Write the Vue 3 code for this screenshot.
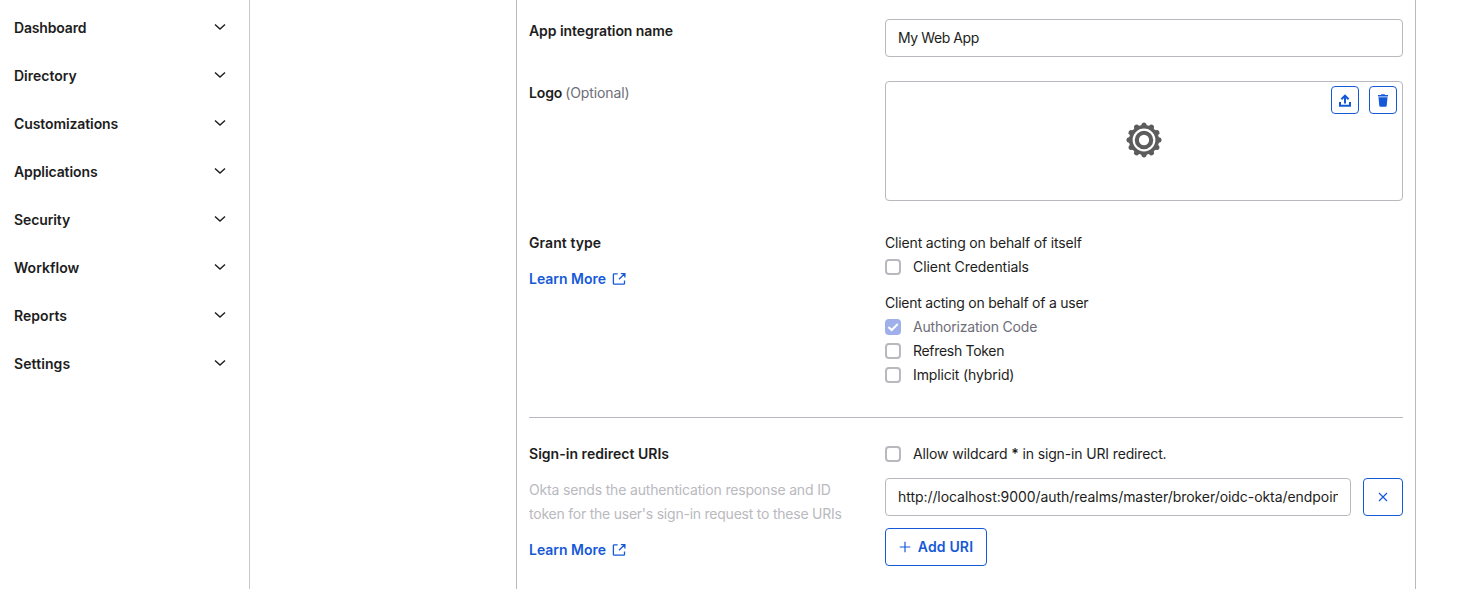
<script setup>
const nav = ['Dashboard', 'Directory', 'Customizations', 'Applications', 'Security', 'Workflow', 'Reports', 'Settings']
const teeth = Array.from({ length: 12 }, (_, i) => i * 30)
const userGrants = [
  { label: 'Authorization Code', cls: 'auth-code', checked: true },
  { label: 'Refresh Token', cls: 'refresh', checked: false },
  { label: 'Implicit (hybrid)', cls: 'implicit', checked: false }
]
</script>

<template>
  <div class="page">
    <nav class="sidebar">
      <a v-for="item in nav" :key="item" class="nav-item" :class="'nav-' + item.toLowerCase()">
        <span>{{ item }}</span>
        <svg width="12" height="8" viewBox="0 0 12 8" fill="none"><path d="M1 1.6 6 6.1 11 1.6" stroke="#1d1d21" stroke-width="1.4" /></svg>
      </a>
    </nav>
    <main class="main">
      <section class="card">
        <div class="row">
          <div class="label app-name">App integration name</div>
          <div class="value"><div class="input"><span class="my-app">My Web App</span></div></div>
        </div>
        <div class="row row-logo">
          <div class="label"><span class="logo-label">Logo</span><span class="optional">(Optional)</span></div>
          <div class="value logo-box">
            <svg class="gear" width="36" height="36" viewBox="-18 -18 36 36">
              <path v-for="a in teeth" :key="a" :transform="`rotate(${a})`" d="M-3.4-13.4 -1.9-16.8Q0-18.3 1.9-16.8L3.4-13.4Z" fill="#5c5c5c" />
              <circle r="13.2" fill="none" stroke="#5c5c5c" stroke-width="3.6" />
              <circle r="7.2" fill="none" stroke="#5c5c5c" stroke-width="4.1" />
            </svg>
            <div class="logo-actions">
              <button class="mini">
                <svg width="12" height="13" viewBox="0 0 12 13" fill="none" stroke="#1659d8"><path d="M1 8v3.7h10V8" stroke-width="2" /><path d="M6 9.5V1.8M2.4 5.3 6 1.7 9.6 5.3" stroke-width="2" /></svg>
              </button>
              <button class="mini">
                <svg width="12" height="13" viewBox="0 0 12 13" fill="#1659d8"><path d="M1 1.1h2.8L4.5.3h3l.7.8H11v1.5H1zM1.5 3.3h9l-.8 8.5q-.1.9-1 .9H3.3q-.9 0-1-.9z" /></svg>
              </button>
            </div>
          </div>
        </div>
        <div class="row row-grant">
          <div class="label">
            <div class="grant">Grant type</div>
            <a class="link"><span>Learn More</span>
              <svg width="14" height="14" viewBox="0 0 14 14" fill="none" stroke="#1659d8" stroke-width="1.3"><path d="M5.6 1.8H2.2q-.8 0-.8.8v8.8q0 .8.8.8h9.5q.8 0 .8-.8V8.4M8.9 1.6h4v3.8M12.7 1.8 7 7.3" /></svg>
            </a>
          </div>
          <div class="value">
            <div class="itself">Client acting on behalf of itself</div>
            <label class="check"><i class="box"></i><span class="creds">Client Credentials</span></label>
            <div class="group-title of-user">Client acting on behalf of a user</div>
            <label v-for="g in userGrants" :key="g.label" class="check" :class="{ disabled: g.checked }">
              <i class="box"><svg v-if="g.checked" width="16" height="16" viewBox="0 0 16 16" fill="none"><path d="M3.4 7.9 6.7 11 12.8 5" stroke="#fff" stroke-width="2" /></svg></i>
              <span :class="g.cls">{{ g.label }}</span>
            </label>
          </div>
        </div>
        <div class="divider"></div>
        <div class="row row-uris">
          <div class="label">
            <div class="signin">Sign-in redirect URIs</div>
            <p class="hint"><span class="hint-a">Okta sends the authentication response and ID</span><br><span class="hint-b">token for the user's sign-in request to these URIs</span></p>
            <a class="link"><span>Learn More</span>
              <svg width="14" height="14" viewBox="0 0 14 14" fill="none" stroke="#1659d8" stroke-width="1.3"><path d="M5.6 1.8H2.2q-.8 0-.8.8v8.8q0 .8.8.8h9.5q.8 0 .8-.8V8.4M8.9 1.6h4v3.8M12.7 1.8 7 7.3" /></svg>
            </a>
          </div>
          <div class="value">
            <label class="check"><i class="box"></i><span class="wild">Allow wildcard <b>*</b> in sign-in URI redirect.</span></label>
            <div class="uri-row">
              <div class="input"><span class="uri">http://localhost:9000/auth/realms/master/broker/oidc-okta/endpoint</span></div>
              <button class="remove"><svg width="10" height="10" viewBox="0 0 10 10" fill="none"><path d="M1 1 9 9M9 1 1 9" stroke="#1659d8" stroke-width="1.2" /></svg></button>
            </div>
            <button class="add"><svg width="12" height="12" viewBox="0 0 12 12" fill="none"><path d="M6 .7v10.6M.7 6h10.6" stroke="#1659d8" stroke-width="1.2" /></svg><span>Add URI</span></button>
          </div>
        </div>
      </section>
    </main>
  </div>
</template>

<style>
body { background: #fff; overflow: hidden; }
</style>
<style scoped>
* { box-sizing: border-box; }
.page { display: flex; height: 589px; overflow: hidden; font: 400 14px/24px Inter, "Liberation Sans", sans-serif; color: #1d1d21; white-space: nowrap; }
.sidebar { flex: none; width: 250px; padding-top: 4px; border-right: 1px solid #c8c8cc; }
.nav-item { display: flex; align-items: center; justify-content: space-between; height: 48px; padding: 0 23px 0 14px; font-weight: 600; letter-spacing: -.1px; }
.nav-item svg { margin-top: -2px; }
.nav-dashboard { letter-spacing: -.17px; }
.nav-directory { letter-spacing: 0; }
.nav-workflow, .nav-reports { letter-spacing: .04px; }
.nav-settings { letter-spacing: .08px; }
.main { flex: 1; padding-left: 266px; }
.card { width: 900px; height: 589px; padding: 19px 12px 0; border: solid #b8b8be; border-width: 0 1px; }
.row { display: flex; }
.label { flex: none; width: 356px; font-weight: 600; }
.value { flex: none; width: 518px; }
.row-logo { margin-top: 24px; }
.row-grant { margin-top: 30px; }
.divider { height: 1px; margin-top: 30px; background: #b8b8be; }
.row-uris { margin-top: 24px; }
.input { display: flex; align-items: center; flex: 1; min-width: 0; height: 38px; padding: 0 12px; border: 1px solid #b8b8be; border-radius: 4px; }
.input span { overflow: hidden; flex: 1; }
.logo-box { position: relative; display: flex; align-items: center; justify-content: center; height: 120px; border: 1px solid #b8b8be; border-radius: 4px; }
.gear { margin: -2px 1px 0 0; }
.logo-actions { position: absolute; top: 4px; right: 5px; display: flex; gap: 10px; }
button { display: flex; align-items: center; justify-content: center; padding: 0; background: #fff; border: 1px solid #1659d8; border-radius: 4px; color: #1659d8; font: inherit; }
.mini { width: 28px; height: 28px; }
.remove { flex: none; width: 40px; height: 38px; }
.add { gap: 7px; width: 102px; height: 38px; margin-top: 12px; font-weight: 600; letter-spacing: .15px; }
.link { display: flex; align-items: center; gap: 6px; margin-top: 12px; color: #1659d8; letter-spacing: -.02px; }
.check { display: flex; align-items: center; gap: 12px; height: 24px; }
.box { flex: none; width: 16px; height: 16px; border: 2px solid #b8b8bf; border-radius: 4px; }
.disabled { color: #6e6e78; }
.disabled .box { display: flex; border: 0; background: #9fafe9; }
.group-title { margin-top: 12px; }
.hint { margin: 12px 0 0; font-weight: 400; color: #b9b9c0; }
.uri-row { display: flex; gap: 12px; margin-top: 12px; }
.app-name { letter-spacing: -.07px; }
.my-app { letter-spacing: -.42px; }
.logo-label { letter-spacing: -.15px; }
.optional { margin-left: 3px; font-weight: 400; color: #6e6e78; letter-spacing: -.09px; }
.grant { letter-spacing: .07px; }
.itself { letter-spacing: -.16px; }
.creds { letter-spacing: -.06px; }
.of-user { letter-spacing: -.23px; }
.auth-code { letter-spacing: -.19px; }
.refresh { letter-spacing: -.3px; }
.implicit { letter-spacing: -.13px; }
.signin { letter-spacing: .03px; }
.hint-a { letter-spacing: -.17px; }
.hint-b { letter-spacing: -.23px; }
.wild { letter-spacing: -.14px; }
.wild b { font-weight: 600; }
.uri { letter-spacing: -.06px; }
</style>
